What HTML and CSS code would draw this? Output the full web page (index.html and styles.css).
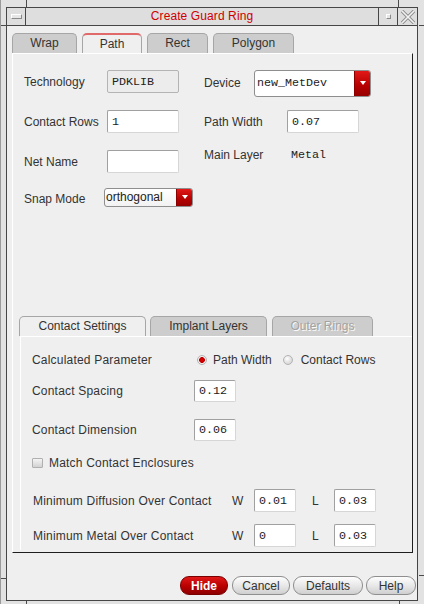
FILE: index.html
```html
<!DOCTYPE html>
<html>
<head>
<meta charset="utf-8">
<title>Create Guard Ring</title>
<link rel="stylesheet" href="styles.css">
</head>
<body>
<div class="window">
  <span class="mark mk-tl-v"></span>
  <span class="mark mk-tl-h"></span>
  <span class="mark mk-tr-v"></span>
  <span class="mark mk-tr-h"></span>
  <span class="mark mk-bl-h"></span>
  <span class="mark mk-bl-v"></span>
  <span class="mark mk-br-v"></span>
  <span class="mark mk-br-h"></span>
  <div class="frame">
    <div class="titlebar">
      <div class="tb-btn tb-menu"><span class="menu-icon"></span></div>
      <div class="tb-title">Create Guard Ring</div>
      <div class="tb-btn tb-max"><span class="max-icon"></span></div>
      <div class="tb-btn tb-close">
        <svg width="16" height="14" viewBox="0 0 16 14">
          <path d="M2 1 L14 13 M14 1 L2 13" stroke="#8c8c8c" stroke-width="3.4" fill="none"/>
          <path d="M2 1 L14 13 M14 1 L2 13" stroke="#f2f2f2" stroke-width="1.6" fill="none"/>
        </svg>
      </div>
    </div>
    <div class="content">
      <div class="tabs">
        <div class="tab t-wrap">Wrap</div>
        <div class="tab active t-path">Path</div>
        <div class="tab t-rect">Rect</div>
        <div class="tab t-poly">Polygon</div>
      </div>
      <div class="panel">
        <div class="upper">
          <div class="col col-left">
            <div class="frow">
              <span class="lbl lw83">Technology</span>
              <span class="field ro mono w72">PDKLIB</span>
            </div>
            <div class="frow">
              <span class="lbl lw83">Contact Rows</span>
              <span class="field mono w72">1</span>
            </div>
            <div class="frow">
              <span class="lbl lw83">Net Name</span>
              <span class="field mono w72"></span>
            </div>
            <div class="frow snap">
              <span class="lbl lw80 snap-lbl">Snap Mode</span>
              <span class="combo combo-snap"><span class="combo-text">orthogonal</span><span class="combo-btn"><i class="tri"></i></span></span>
            </div>
          </div>
          <div class="col col-right">
            <div class="frow dev">
              <span class="lbl lw50">Device</span>
              <span class="combo combo-dev"><span class="combo-text mono">new_MetDev</span><span class="combo-btn"><i class="tri"></i></span></span>
            </div>
            <div class="frow pw">
              <span class="lbl lw83">Path Width</span>
              <span class="field mono w72">0.07</span>
            </div>
            <div class="frow ml">
              <span class="lbl lw87">Main Layer</span>
              <span class="value mono">Metal</span>
            </div>
          </div>
        </div>
        <div class="lower">
          <div class="subtabs">
            <div class="tab active st-contact">Contact Settings</div>
            <div class="tab st-implant">Implant Layers</div>
            <div class="tab disabled st-outer">Outer Rings</div>
          </div>
          <div class="subpanel">
            <div class="srow r-calc">
              <span class="lbl lw165 sp">Calculated Parameter</span>
              <span class="radio on"></span><span class="rtext">Path Width</span>
              <span class="radio off r2"></span><span class="rtext">Contact Rows</span>
            </div>
            <div class="srow r-space">
              <span class="lbl lw162 sp">Contact Spacing</span>
              <span class="field mono w42">0.12</span>
            </div>
            <div class="srow r-dim">
              <span class="lbl lw162 sp">Contact Dimension</span>
              <span class="field mono w42">0.06</span>
            </div>
            <div class="srow r-check">
              <span class="check"></span><span class="ctext sp">Match Contact Enclosures</span>
            </div>
            <div class="srow r-min r-diff">
              <span class="lbl lw199 sp">Minimum Diffusion Over Contact</span>
              <span class="wl">W</span>
              <span class="field mono w42">0.01</span>
              <span class="wl wl-l">L</span>
              <span class="field mono w42">0.03</span>
            </div>
            <div class="srow r-min r-metal">
              <span class="lbl lw199 sp">Minimum Metal Over Contact</span>
              <span class="wl">W</span>
              <span class="field mono w42">0</span>
              <span class="wl wl-l">L</span>
              <span class="field mono w42">0.03</span>
            </div>
          </div>
        </div>
      </div>
      <div class="buttons">
        <span class="btn hide">Hide</span>
        <span class="btn b-cancel">Cancel</span>
        <span class="btn b-defaults">Defaults</span>
        <span class="btn b-help">Help</span>
      </div>
    </div>
  </div>
</div>
</body>
</html>
```

FILE: styles.css
```css
* { box-sizing: border-box; }
html, body { margin: 0; padding: 0; }
body {
  width: 424px;
  height: 604px;
  overflow: hidden;
  background: #e2e2e2;
  font-family: "Liberation Sans", Arial, sans-serif;
  font-size: 12px;
  color: #333;
}
.window {
  position: relative;
  width: 424px;
  height: 604px;
  padding: 7px 6px 3px 5px;
  background: #e2e2e2;
  border-left: 1px solid #9a9a9a;
}
.mark { position: absolute; background: #4a4a4a; }
.mk-tl-v { left: 25px; top: 0; width: 1px; height: 7px; }
.mk-tl-h { left: 0; top: 25px; width: 6px; height: 1px; }
.mk-tr-v { left: 397px; top: 0; width: 1px; height: 7px; }
.mk-tr-h { left: 418px; top: 25px; width: 6px; height: 1px; }
.mk-bl-h { left: 0; top: 578px; width: 6px; height: 1px; }
.mk-bl-v { left: 25px; top: 601px; width: 1px; height: 3px; }
.mk-br-v { left: 398px; top: 601px; width: 1px; height: 3px; }
.mk-br-h { left: 418px; top: 575px; width: 6px; height: 1px; }

.frame {
  height: 594px;
  border: 1px solid #464646;
  background: #efefef;
  display: flex;
  flex-direction: column;
}
.titlebar {
  height: 18px;
  display: flex;
  background: #dedede;
  border-bottom: 1px solid #464646;
}
.tb-btn { height: 17px; display: flex; align-items: center; justify-content: center; }
.tb-menu { width: 19px; border-right: 1px solid #464646; }
.menu-icon {
  width: 11px; height: 5px;
  border: 1px solid #8a8a8a;
  border-top-color: #fff; border-left-color: #fff;
  background: #e6e6e6;
}
.tb-title {
  flex: 1;
  text-align: center;
  line-height: 17px;
  color: #d00000;
  letter-spacing: 0.1px;
}
.tb-max { width: 20px; border-left: 1px solid #464646; border-right: 1px solid #464646; }
.max-icon {
  width: 5px; height: 5px;
  border: 1px solid #8a8a8a;
  border-top-color: #fff; border-left-color: #fff;
  background: #e6e6e6;
}
.tb-close { width: 19px; }

.content {
  flex: 1;
  padding: 7px 4px 0 5px;
  display: flex;
  flex-direction: column;
}
.tabs, .subtabs {
  display: flex;
  height: 20px;
  gap: 5px;
  align-items: flex-end;
}
.tab {
  height: 20px;
  border: 1px solid #a6a6a6;
  border-bottom: none;
  border-radius: 5px 5px 0 0;
  background: #cdcdcd;
  text-align: center;
  line-height: 19px;
  color: #333;
  white-space: nowrap;
}
.tab.active { background: #efefef; }
.t-path { border-top: 2px solid #e06a6a; line-height: 18px; }
.t-wrap { width: 65px; }
.t-path { width: 60px; }
.t-rect { width: 61px; }
.t-poly { width: 81px; }
.st-contact { width: 127px; }
.st-implant { width: 117px; margin-left: -1px; }
.st-outer { width: 101px; }
.tab.disabled { color: #a3a3a3; text-shadow: 1px 1px 0 #fafafa; }

.panel {
  height: 500px;
  border-top: 1px solid #ffffff;
  border-left: 1px solid #ffffff;
  border-right: 1px solid #1e1e1e;
  border-bottom: 1px solid #1e1e1e;
  display: flex;
  flex-direction: column;
}
.upper {
  display: flex;
  align-items: flex-start;
  padding: 16px 0 0 11px;
}
.col { display: flex; flex-direction: column; }
.col-left { width: 180px; }
.frow { display: flex; align-items: center; height: 23px; }
.frow + .frow { margin-top: 17px; }
.frow.snap { height: 18px; margin-top: 15px; }
.snap-lbl { padding-top: 3px; }
.frow.dev { height: 26px; }
.frow.pw { margin-top: 14px; }
.frow.ml { margin-top: 10px; }
.lbl { flex: none; white-space: nowrap; }
.sp { letter-spacing: 0.2px; }
.lw50 { width: 50px; }
.lw80 { width: 80px; }
.lw83 { width: 83px; }
.lw87 { width: 87px; }
.lw162 { width: 162px; }
.lw165 { width: 165px; }
.lw199 { width: 199px; }

.mono { font-family: "Liberation Mono", "Courier New", monospace; font-size: 11.7px; color: #222; }
.field {
  flex: none;
  display: flex;
  align-items: center;
  height: 23px;
  padding-left: 4px;
  background: #ffffff;
  border: 1px solid #a0a0a0;
  border-right-color: #d6d6d6;
  border-bottom-color: #d6d6d6;
  border-radius: 2px;
  white-space: pre;
}
.field.ro { background: #ececec; border-color: #b4b4b4; }
.w72 { width: 72px; }
.w42 { width: 42px; height: 22px; }

.combo {
  flex: none;
  display: flex;
  align-items: stretch;
  background: #fff;
  border: 1px solid #8e8e8e;
  border-radius: 3px;
  overflow: hidden;
}
.combo-text { flex: 1; display: flex; align-items: center; padding-left: 2px; white-space: nowrap; }
.combo-snap { width: 89px; height: 19px; background: linear-gradient(#ffffff, #f2f2f2); }
.combo-snap .combo-text { color: #222; padding-left: 1px; }
.combo-dev { width: 117px; height: 27px; }
.combo-btn {
  width: 16px;
  display: flex;
  align-items: center;
  justify-content: center;
  background: linear-gradient(#e21818, #b50000 60%, #960000);
  border-left: 1px solid #8a0000;
}
.tri {
  display: block;
  width: 0; height: 0;
  border-left: 3px solid transparent;
  border-right: 3px solid transparent;
  border-top: 4px solid #ffffff;
}

.lower {
  margin-top: auto;
  margin-bottom: 2px;
  padding-left: 6px;
}
.subpanel {
  margin-left: 1px;
  height: 214px;
  border-top: 1px solid #ffffff;
  border-left: 1px solid #ffffff;
  padding: 13px 0 0 11px;
  display: flex;
  flex-direction: column;
}
.srow { display: flex; align-items: center; }
.r-calc { height: 20px; }
.r-space { height: 22px; margin-top: 10px; }
.r-dim { height: 22px; margin-top: 17px; }
.r-check { height: 18px; margin-top: 13px; }
.r-min { height: 23px; padding-left: 1px; }
.r-diff { margin-top: 17px; }
.r-metal { margin-top: 12px; }
.r-min .field { height: 23px; }

.radio {
  flex: none;
  width: 10px; height: 10px;
  border-radius: 50%;
  border: 1px solid #b4b4b4;
}
.radio.on { background: radial-gradient(circle at 50% 50%, #e00000 0, #c00000 2.6px, #f4f4f4 3.2px, #d8d8d8 100%); }
.radio.off { background: radial-gradient(circle at 40% 35%, #ffffff 0, #e6e6e6 3px, #cbcbcb 100%); }
.rtext { margin-left: 6px; }
.radio.r2 { margin-left: 11px; }
.radio.r2 + .rtext { margin-left: 8px; }

.check {
  flex: none;
  width: 11px; height: 10px;
  border: 1px solid #b0b0b0;
  background: linear-gradient(#f4f4f4, #d2d2d2);
  border-radius: 1px;
}
.ctext { margin-left: 6px; }
.wl { flex: none; width: 22px; }
.wl-l { margin-left: 16px; }

.buttons {
  display: flex;
  justify-content: flex-end;
  gap: 3px;
  margin-top: 23px;
  margin-right: -3px;
  height: 19px;
}
.btn {
  display: flex;
  align-items: center;
  justify-content: center;
  height: 19px;
  border: 1px solid #8e8e8e;
  border-radius: 9px;
  background: linear-gradient(#fdfdfd, #e6e6e6 55%, #cfcfcf);
  color: #333;
  white-space: nowrap;
}
.hide {
  width: 48px;
  margin-right: 1px;
  background: linear-gradient(#e01818, #b80000 55%, #8e0000);
  border-color: #7a0000;
  color: #ffffff;
  font-weight: bold;
}
.b-cancel { width: 58px; }
.b-defaults { width: 70px; }
.b-help { width: 50px; }
```
